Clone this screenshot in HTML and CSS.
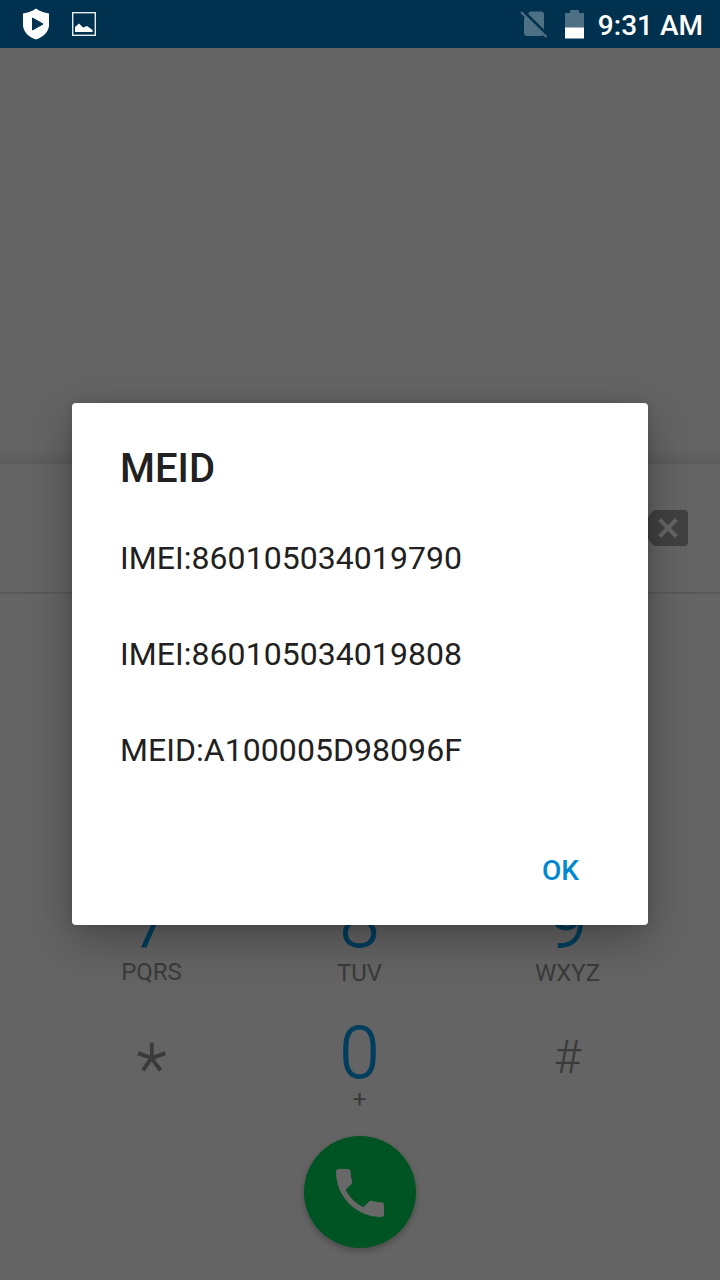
FILE: index.html
```html
<!DOCTYPE html>
<html lang="en">
<head>
<meta charset="utf-8">
<title>MEID</title>
<link rel="stylesheet" href="styles.css">
</head>
<body>
<div class="screen">
  <header class="status">
    <svg class="shield" width="28" height="32" viewBox="0 0 28 32"><path d="M14 0.5C18 3.500 22 4.800 27 5.500V17C27 24 21 29 14 31.500C7 29 1 24 1 17V5.500C6 4.800 10 3.500 14 .5Z" fill="#fff"/><path d="M10.500 10L21 16L10.500 22Z" fill="#00314e" stroke="#00314e" stroke-linejoin="round"/></svg>
    <svg class="image" width="24" height="24" viewBox="0 0 24 24"><rect x=".7" y=".7" width="22.600" height="22.600" fill="none" stroke="#e4eaee" stroke-width="1.400"/><path d="M3 20V15L7 11.500L11 15.500L15 14L20.500 18V20Z" fill="#fff"/></svg>
    <svg class="sim" width="28" height="28" viewBox="0 0 28 28"><path d="M4 8L10 1.500H21Q24 1.500 24 4.500V23Q24 26 21 26H7Q4 26 4 23Z" fill="#4d7085"/><path d="M2.500 0.500L28 25.500" stroke="#00314e" stroke-width="3"/><path d="M1 2L26.500 27" stroke="#4d7085" stroke-width="2.200"/></svg>
    <svg class="battery" width="20" height="30" viewBox="0 0 20 30"><path d="M0 4H5V1H14V4H19V19H0Z" fill="#4d7085"/><path d="M0 18.500H19V29.500H0Z" fill="#fff"/></svg>
    <time class="clock">9:31 AM</time>
  </header>
  <main class="dialer">
    <section class="history"></section>
    <section class="number">
      <svg width="60" height="36" viewBox="0 0 60 36"><path d="M24 2Q25.500 0 28 0H56Q60 0 60 4V32Q60 36 56 36H28Q25.500 36 24 34L12 18Z" fill="#414141"/><path d="M31.500 9.500L48.500 26.500M48.500 9.500L31.500 26.500" stroke="#646464" stroke-width="4.200"/></svg>
    </section>
    <section class="keys">
      <div class="key"><span class="digit">7</span><span class="letters raised">PQRS</span></div>
      <div class="key"><span class="digit">8</span><span class="letters">TUV</span></div>
      <div class="key"><span class="digit">9</span><span class="letters">WXYZ</span></div>
      <div class="key"><span class="star">*</span></div>
      <div class="key"><span class="digit zero">0</span><span class="letters plus">+</span></div>
      <div class="key"><span class="hash">#</span></div>
    </section>
    <div class="call">
      <svg width="64" height="64" viewBox="0 0 24 24"><path d="M6.620 10.790c1.440 2.830 3.760 5.140 6.590 6.590l2.200-2.200c.27-.27.67-.36 1.020-.24 1.120.37 2.330.57 3.570.57.550 0 1 .45 1 1V20c0 .55-.45 1-1 1-9.390 0-17-7.610-17-17 0-.55.45-1 1-1h3.500c.55 0 1 .45 1 1 0 1.250.2 2.450.57 3.570.11.350.03.740-.25 1.020l-2.200 2.200z" fill="#686868"/></svg>
    </div>
  </main>
  <div class="dialog" role="dialog">
    <h1 class="title">MEID</h1>
    <p class="line">IMEI:860105034019790</p>
    <p class="line">IMEI:860105034019808</p>
    <p class="line">MEID:A100005D98096F</p>
    <button class="ok">OK</button>
  </div>
</div>
</body>
</html>
```
FILE: styles.css
```css
* { box-sizing: border-box; }
body { margin: 0; font-family: Roboto, "Liberation Sans", sans-serif; }
.screen { position: relative; width: 720px; height: 1280px; overflow: hidden; background: #646464; }
svg { display: block; flex: none; }
.status { height: 48px; display: flex; align-items: center; padding: 0 17px 0 22px; background: #00314e; }
.image { margin-left: 22px; }
.sim { margin-left: auto; }
.battery { margin-left: 17px; }
.clock { margin-left: 13px; padding-top: 3px; font-size: 28px; font-weight: 500; line-height: 32px; color: #fff; white-space: nowrap; }
.dialer { display: flex; flex-direction: column; align-items: center; }
.history { width: 100%; height: 416px; background: linear-gradient(to top, #5b5b5b 0, #606060 6px, #646464 16px); }
.number { width: 100%; height: 130px; padding: 46px 32px 0 0; display: flex; justify-content: flex-end; border-bottom: 2px solid #595959; }
.keys { height: 542px; padding: 292px 1px 0 0; display: grid; grid-template-columns: repeat(3, 208px); grid-template-rows: 130px 120px; }
.key { display: flex; flex-direction: column; align-items: center; }
.digit { height: 72px; font-size: 72px; font-weight: 300; line-height: 74px; color: #003e5e; -webkit-text-stroke: .9px #003e5e; }
.zero { line-height: 76px; }
.letters { font-size: 24px; line-height: 28px; color: #3a3a3a; margin-top: 1px; }
.raised { margin-top: 0; }
.plus { margin-top: -3px; }
.star { font-size: 70px; font-weight: 300; line-height: 72px; color: #3a3a3a; margin-top: 17px; -webkit-text-stroke: .5px #3a3a3a; }
.hash { font-size: 47px; font-weight: 300; line-height: 56px; color: #3a3a3a; margin: 13px 0 0; }
.call { width: 112px; height: 112px; padding-top: 2px; display: grid; place-items: center; border-radius: 50%; background: #005322; box-shadow: 0 3px 6px rgba(0,0,0,.25); }
.dialog { position: absolute; left: 72px; top: 403px; width: 576px; height: 522px; padding: 42px 48px 0; display: flex; flex-direction: column; border-radius: 4px; background: #fff; color: #212121; box-shadow: 0 14px 44px rgba(0,0,0,.3), 0 0 10px rgba(0,0,0,.12); }
.title { margin: 0 0 41px; font-size: 40px; font-weight: 500; line-height: 48px; }
.line { margin: 0 0 48px; font-size: 32px; line-height: 48px; letter-spacing: .05px; }
.ok { align-self: flex-end; margin: 25px 21px 0 0; padding: 0; border: 0; background: none; font: 500 28px/48px Roboto, sans-serif; color: #0288d1; }
```
